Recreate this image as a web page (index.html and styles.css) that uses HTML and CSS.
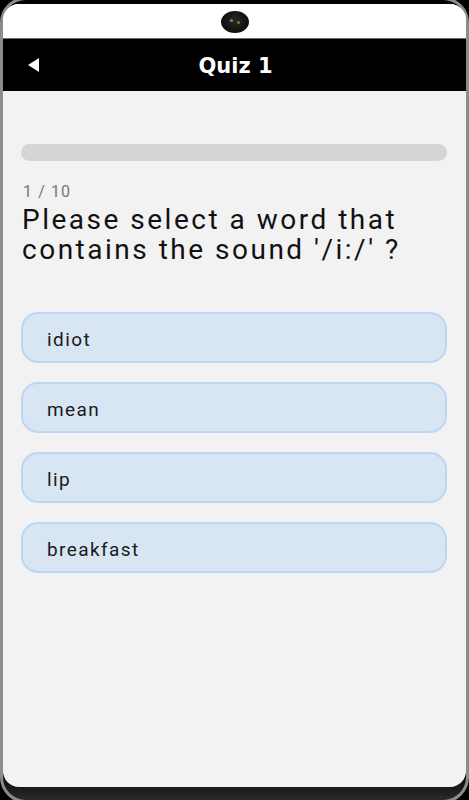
FILE: index.html
```html
<!DOCTYPE html>
<html>
<head>
<meta charset="utf-8">
<link rel="stylesheet" href="styles.css">
</head>
<body>
<div class="device">
  <div class="screen">
    <div class="status">
      <div class="camera"><span class="glint g1"></span><span class="glint g2"></span></div>
    </div>
    <header class="appbar">
      <button class="back" aria-label="Back">
        <svg width="12" height="14" viewBox="0 0 12 14"><polygon points="11,0 11,14 0,7" fill="#fff"/></svg>
      </button>
      <h1 class="title">Quiz 1</h1>
    </header>
    <main class="content">
      <div class="progress"><div class="progress-fill" style="width:0%"></div></div>
      <div class="counter">1 / 10</div>
      <h2 class="question">Please select a word that contains the sound '/i:/' ?</h2>
      <div class="options">
        <button class="option">idiot</button>
        <button class="option">mean</button>
        <button class="option">lip</button>
        <button class="option">breakfast</button>
      </div>
    </main>
  </div>
</div>
</body>
</html>
```

FILE: styles.css
```css
* { box-sizing: border-box; }
html, body { margin: 0; padding: 0; background: #000; overflow: hidden; }
.device {
  width: 469px;
  height: 806px;
  margin-top: -3px;
  border: 3px solid #8c8c8c;
  border-radius: 26px;
  background: linear-gradient(#000 0, #000 96%, #2a2a2a 100%);
  padding: 4px 0 13px 0;
}
.screen {
  height: 100%;
  background: #f2f2f2;
  border-radius: 16px;
  overflow: hidden;
  display: flex;
  flex-direction: column;
}
.status {
  height: 34px;
  background: #fff;
  display: flex;
  justify-content: center;
  padding-top: 7px;
}
.camera {
  position: relative;
  width: 28px;
  height: 22px;
  border-radius: 50%;
  background: radial-gradient(ellipse at 50% 45%, #2a2a2a 0%, #111 60%, #000 100%);
}
.glint { position: absolute; width: 3px; height: 3px; border-radius: 50%; }
.g1 { left: 9px; top: 8px; background: #8a8470; }
.g2 { left: 16px; top: 10px; background: #a06a1c; }
.appbar {
  height: 53px;
  background: #000;
  border-top: 1px solid #6a6a6a;
  display: flex;
  align-items: center;
  position: relative;
}
.back {
  position: absolute;
  left: 25px;
  top: 19px;
  background: none;
  border: 0;
  padding: 0;
  display: flex;
}
.title {
  flex: 1;
  margin: 0;
  text-align: center;
  color: #fff;
  font-family: "DejaVu Sans", "Open Sans", sans-serif;
  font-weight: 700;
  font-size: 21px;
  line-height: 1;
  padding-top: 2px;
  padding-left: 2px;
}
.content {
  flex: 1;
  padding: 53px 19px 0 18px;
  font-family: Roboto, "Noto Sans", sans-serif;
}
.progress {
  height: 17px;
  border-radius: 9px;
  background: #d5d5d5;
  overflow: hidden;
}
.progress-fill { height: 100%; background: #2f80ed; }
.counter {
  margin-top: 22px;
  padding-left: 2px;
  font-size: 16px;
  line-height: 18px;
  color: #777;
  letter-spacing: 1.1px;
}
.question {
  margin: 4px 0 0 0;
  padding-left: 1px;
  font-weight: 400;
  font-size: 28px;
  line-height: 30px;
  color: #111;
  letter-spacing: 2.5px;
}
.options {
  margin-top: 47px;
  display: flex;
  flex-direction: column;
  gap: 19px;
}
.option {
  height: 51px;
  width: 100%;
  text-align: left;
  padding: 3px 0 0 24px;
  background: #d8e5f3;
  border: 2px solid #bcd7f5;
  border-radius: 17px;
  font-family: Roboto, "Noto Sans", sans-serif;
  font-size: 19px;
  color: #1a1a1a;
  letter-spacing: 1.4px;
}
```
